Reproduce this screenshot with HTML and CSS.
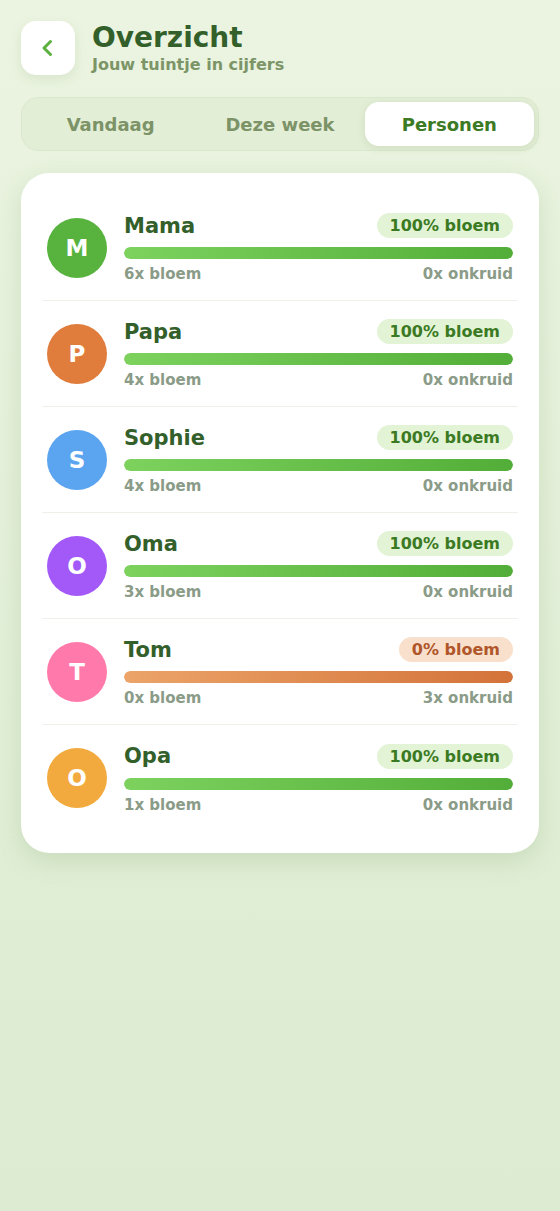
FILE: index.html
```html
<!DOCTYPE html>
<html lang="nl">
<head>
    <meta charset="UTF-8">
    <meta name="viewport" content="width=device-width, initial-scale=1.0">
    <title>Overzicht</title>
    <link rel="stylesheet" href="styles.css">
</head>
<body>

    <div class="page">
        <div class="header">
            <button class="back-btn" aria-label="Terug">
                <svg width="20" height="20" viewBox="0 0 20 20">
                    <path d="M12.5 3.5 L6 10 L12.5 16.5" fill="none" stroke="#5cb040" stroke-width="3" stroke-linecap="round" stroke-linejoin="round"/>
                </svg>
            </button>
            <div class="titles">
                <h1>Overzicht</h1>
                <p>Jouw tuintje in cijfers</p>
            </div>
        </div>

        <div class="tabs">
            <div class="tab">Vandaag</div>
            <div class="tab">Deze week</div>
            <div class="tab active">Personen</div>
        </div>

        <div class="card">
            <div class="person">
                <div class="avatar" style="background:#58b33e">M</div>
                <div class="info">
                    <div class="top">
                        <span class="name">Mama</span>
                        <span class="badge">100% bloem</span>
                    </div>
                    <div class="bar"><div class="fill" style="width:100%"></div></div>
                    <div class="stats"><span>6x bloem</span><span>0x onkruid</span></div>
                </div>
            </div>
            <div class="person">
                <div class="avatar" style="background:#e07c3c">P</div>
                <div class="info">
                    <div class="top">
                        <span class="name">Papa</span>
                        <span class="badge">100% bloem</span>
                    </div>
                    <div class="bar"><div class="fill" style="width:100%"></div></div>
                    <div class="stats"><span>4x bloem</span><span>0x onkruid</span></div>
                </div>
            </div>
            <div class="person">
                <div class="avatar" style="background:#5ba4f0">S</div>
                <div class="info">
                    <div class="top">
                        <span class="name">Sophie</span>
                        <span class="badge">100% bloem</span>
                    </div>
                    <div class="bar"><div class="fill" style="width:100%"></div></div>
                    <div class="stats"><span>4x bloem</span><span>0x onkruid</span></div>
                </div>
            </div>
            <div class="person">
                <div class="avatar" style="background:#a259f7">O</div>
                <div class="info">
                    <div class="top">
                        <span class="name">Oma</span>
                        <span class="badge">100% bloem</span>
                    </div>
                    <div class="bar"><div class="fill" style="width:100%"></div></div>
                    <div class="stats"><span>3x bloem</span><span>0x onkruid</span></div>
                </div>
            </div>
            <div class="person">
                <div class="avatar" style="background:#ff7aab">T</div>
                <div class="info">
                    <div class="top">
                        <span class="name">Tom</span>
                        <span class="badge weed">0% bloem</span>
                    </div>
                    <div class="bar"><div class="fill weed" style="width:100%"></div></div>
                    <div class="stats"><span>0x bloem</span><span>3x onkruid</span></div>
                </div>
            </div>
            <div class="person">
                <div class="avatar" style="background:#f2a93e">O</div>
                <div class="info">
                    <div class="top">
                        <span class="name">Opa</span>
                        <span class="badge">100% bloem</span>
                    </div>
                    <div class="bar"><div class="fill" style="width:100%"></div></div>
                    <div class="stats"><span>1x bloem</span><span>0x onkruid</span></div>
                </div>
            </div>
        </div>
    </div>

</body>
</html>
```

FILE: styles.css
```css
html {
    background: #dcebd0;
}
body {
    margin: 0;
    min-height: 1211px;
    font-family: "DejaVu Sans", Verdana, sans-serif;
    font-weight: bold;
    background: linear-gradient(180deg, #ebf4e1 0%, #dcebd1 100%);
}
.page {
    padding: 21px;
}
.header {
    display: flex;
    align-items: center;
    gap: 17px;
}
.back-btn {
    width: 54px;
    height: 54px;
    border: none;
    border-radius: 15px;
    background: #ffffff;
    box-shadow: 0 4px 12px rgba(90, 130, 60, 0.12);
    display: flex;
    align-items: center;
    justify-content: center;
    padding: 0;
    cursor: pointer;
}
.titles h1 {
    margin: 0;
    font-size: 28px;
    line-height: 34px;
    color: #33602a;
}
.titles p {
    margin: 0;
    font-size: 16px;
    line-height: 20px;
    color: #7c9567;
}
.tabs {
    margin-top: 22px;
    height: 54px;
    box-sizing: border-box;
    padding: 4px;
    display: flex;
    background: #e3eed6;
    border: 1px solid #dbe8ce;
    border-radius: 17px;
}
.tab {
    flex: 1;
    display: flex;
    align-items: center;
    justify-content: center;
    font-size: 18px;
    color: #7c9267;
    border-radius: 14px;
}
.tab.active {
    background: #ffffff;
    color: #3d7a24;
    box-shadow: 0 2px 8px rgba(90, 130, 60, 0.15);
}
.card {
    margin-top: 22px;
    background: #ffffff;
    border-radius: 28px;
    padding: 22px 21px;
    box-shadow: 0 8px 24px rgba(90, 140, 60, 0.18);
}
.person {
    height: 106px;
    box-sizing: border-box;
    display: flex;
    align-items: center;
    gap: 17px;
    padding: 0 5px;
    border-bottom: 1px solid #eef1ea;
}
.person:last-child {
    border-bottom: none;
}
.avatar {
    width: 60px;
    height: 60px;
    flex-shrink: 0;
    border-radius: 50%;
    display: flex;
    align-items: center;
    justify-content: center;
    color: #ffffff;
    font-size: 23px;
}
.info {
    flex: 1;
    padding-top: 2px;
}
.top {
    display: flex;
    justify-content: space-between;
    align-items: center;
    height: 25px;
}
.name {
    font-size: 21px;
    color: #33602a;
}
.badge {
    font-size: 16px;
    line-height: 25px;
    padding: 0 13px;
    border-radius: 13px;
    background: #e3f3d6;
    color: #3b7a23;
}
.badge.weed {
    background: #f8e0cc;
    color: #b0562a;
}
.bar {
    margin-top: 9px;
    height: 12px;
    border-radius: 6px;
    background: #eef1ea;
    overflow: hidden;
}
.fill {
    height: 100%;
    border-radius: 6px;
    background: linear-gradient(90deg, #7dd25e, #52ae38);
}
.fill.weed {
    background: linear-gradient(90deg, #eca468, #d3733a);
}
.stats {
    margin-top: 6px;
    display: flex;
    justify-content: space-between;
    font-size: 15px;
    line-height: 19px;
    color: #8a9b88;
}
```
